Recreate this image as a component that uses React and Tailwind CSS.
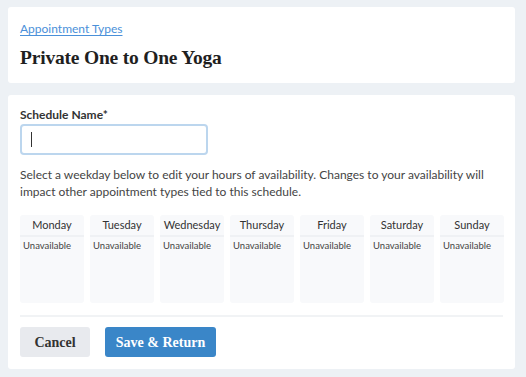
const days = ["Monday", "Tuesday", "Wednesday", "Thursday", "Friday", "Saturday", "Sunday"];

export default function App() {
  const sans = { fontFamily: 'Lato, "Open Sans", sans-serif' };
  const slab = { fontFamily: '"Liberation Serif", "DejaVu Serif", serif' };

  return (
    <div className="min-h-[377px] w-[526px] bg-[#edf1f5] pl-2 pr-[11px] pt-[7px] pb-[9px]" style={sans}>
      {/* Header card */}
      <div className="bg-white rounded-[3px] px-3 pt-[15px] h-[76px]">
        <a href="#" className="block w-fit text-[12px] text-[#4a90d9] underline underline-offset-2 leading-[13px]">
          Appointment Types
        </a>
        <h1 className="mt-[12px] text-[19.5px] font-bold text-[#1f1f1f] leading-[22px] tracking-[-0.2px]" style={slab}>
          Private One to One Yoga
        </h1>
      </div>

      {/* Schedule card */}
      <div className="mt-[12px] bg-white rounded-[3px] px-3 pt-[12px] pb-[12px]">
        <label className="block text-[12px] font-bold text-[#333] leading-4">Schedule Name*</label>
        <div className="mt-[1px] w-[188px] h-[31px] rounded-[4px] border-2 border-[#bcd6ee] flex items-center pl-[9px]">
          <span className="w-px h-[15px] bg-[#333]"></span>
        </div>
        <p className="mt-[11px] text-[12px] leading-[17px] text-[#444]">
          Select a weekday below to edit your hours of availability. Changes to your availability will impact other appointment types tied to this schedule.
        </p>

        <div className="mt-[15px] grid grid-cols-7 gap-[6px] w-[484px]">
          {days.map((d) => (
            <div key={d} className="bg-[#f8f9fb] rounded-[3px] h-[88px]">
              <div className="h-[22px] flex items-center justify-center text-[11px] text-[#333] border-b-2 border-[#eff1f4]">
                {d}
              </div>
              <div className="px-[3px] pt-[1px] text-[9.5px] text-[#444] leading-4">Unavailable</div>
            </div>
          ))}
        </div>

        <div className="mt-[12px] w-[483px] border-t-2 border-[#f1f3f5]"></div>

        <div className="mt-[10px] flex gap-[15px]">
          <button className="w-[70px] h-[30px] rounded-[3px] bg-[#e8eaee] text-[14px] font-bold text-[#333]" style={slab}>
            Cancel
          </button>
          <button className="w-[111px] h-[30px] rounded-[3px] bg-[#3a86c8] text-[14px] font-bold text-white" style={slab}>
            Save &amp; Return
          </button>
        </div>
      </div>
    </div>
  );
}
